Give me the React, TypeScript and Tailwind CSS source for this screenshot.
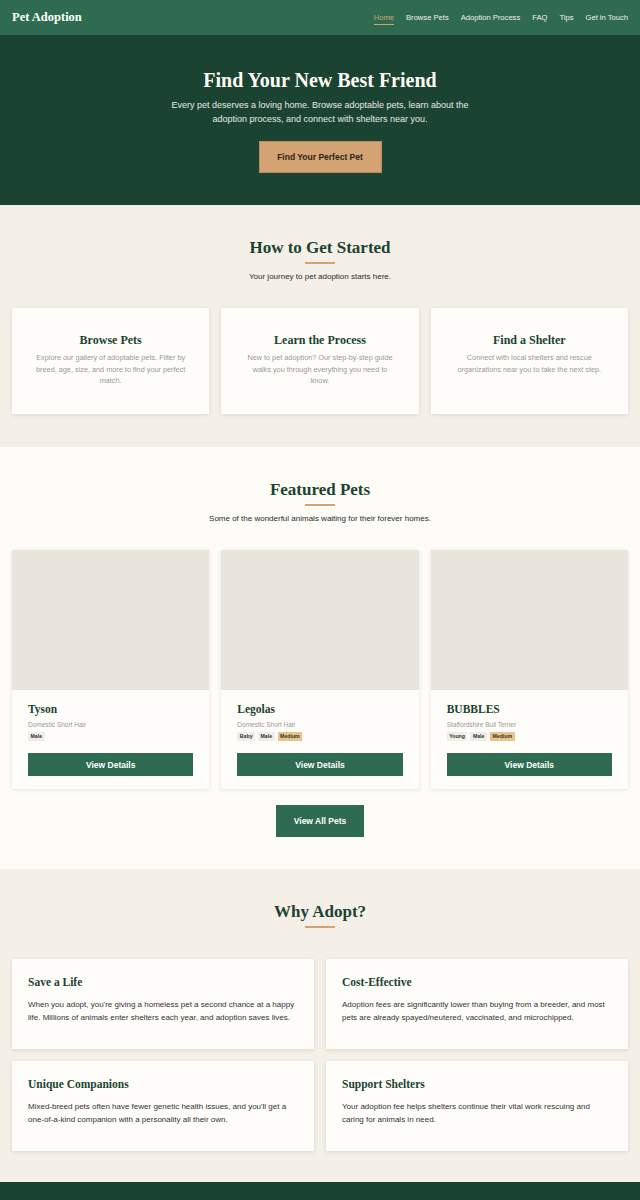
const serif = "font-['Liberation_Serif',Georgia,serif]";

const steps = [
  {
    title: 'Browse Pets',
    text: 'Explore our gallery of adoptable pets. Filter by breed, age, size, and more to find your perfect match.',
  },
  {
    title: 'Learn the Process',
    text: 'New to pet adoption? Our step-by-step guide walks you through everything you need to know.',
  },
  {
    title: 'Find a Shelter',
    text: 'Connect with local shelters and rescue organizations near you to take the next step.',
  },
];

const pets = [
  { name: 'Tyson', breed: 'Domestic Short Hair', tags: ['Male'] },
  { name: 'Legolas', breed: 'Domestic Short Hair', tags: ['Baby', 'Male', 'Medium'] },
  { name: 'BUBBLES', breed: 'Staffordshire Bull Terrier', tags: ['Young', 'Male', 'Medium'] },
];

const reasons = [
  {
    title: 'Save a Life',
    text: "When you adopt, you're giving a homeless pet a second chance at a happy life. Millions of animals enter shelters each year, and adoption saves lives.",
  },
  {
    title: 'Cost-Effective',
    text: 'Adoption fees are significantly lower than buying from a breeder, and most pets are already spayed/neutered, vaccinated, and microchipped.',
  },
  {
    title: 'Unique Companions',
    text: "Mixed-breed pets often have fewer genetic health issues, and you'll get a one-of-a-kind companion with a personality all their own.",
  },
  {
    title: 'Support Shelters',
    text: 'Your adoption fee helps shelters continue their vital work rescuing and caring for animals in need.',
  },
];

const links = ['Home', 'Browse Pets', 'Adoption Process', 'FAQ', 'Tips', 'Get in Touch'];

function SectionHeading({ title, sub }: { title: string; sub?: string }) {
  return (
    <div className="flex flex-col items-center">
      <h2 className={`${serif} text-[17px] font-bold leading-none text-[#1b4332]`}>{title}</h2>
      <div className="mt-[6px] h-[2px] w-[30px] bg-[#d4a373]" />
      {sub && <p className="mt-[6px] text-[8px] leading-[13px] text-[#2b2b2b]">{sub}</p>}
    </div>
  );
}

export default function App() {
  return (
    <div className="min-h-[1200px] bg-[#1b4332] font-['Liberation_Sans',Arial,sans-serif]">
      <nav className="flex h-[35px] items-center justify-between bg-[#2e6b50] px-[12px] shadow-[0_1px_3px_rgba(0,0,0,0.25)]">
        <span className={`${serif} text-[12.5px] font-bold text-white`}>Pet Adoption</span>
        <ul className="flex items-center gap-[12px] text-[7.6px] text-[#f4f0e8]">
          {links.map((l, i) => (
            <li key={l} className="relative">
              <span className={i === 0 ? 'text-[#d4a373]' : ''}>{l}</span>
              {i === 0 && <span className="absolute left-0 right-0 top-[12px] h-[1.5px] bg-[#d4a373]" />}
            </li>
          ))}
        </ul>
      </nav>

      <header className="flex h-[170px] flex-col items-center bg-[#1b4332] pt-[35px] text-center">
        <h1 className={`${serif} text-[20px] font-bold leading-none text-[#fefcf5]`}>Find Your New Best Friend</h1>
        <p className="mt-[8px] w-[300px] text-[9px] leading-[14px] text-[#e8ebe6]">
          Every pet deserves a loving home. Browse adoptable pets, learn about the adoption process, and connect with
          shelters near you.
        </p>
        <button className="mt-[15px] h-[32px] w-[123px] border border-[#b88a5c] bg-[#d4a373] text-[8.5px] font-bold text-[#2a2418]">
          Find Your Perfect Pet
        </button>
      </header>

      <section className="bg-[#f4f0e8] px-[12px] pb-[33px] pt-[34px]">
        <SectionHeading title="How to Get Started" sub="Your journey to pet adoption starts here." />
        <div className="mt-[25px] grid grid-cols-3 gap-[12px]">
          {steps.map((s) => (
            <div
              key={s.title}
              className="flex h-[106px] flex-col items-center bg-[#fefdf9] px-[24px] pt-[26px] text-center shadow-[0_1px_4px_rgba(0,0,0,0.1)]"
            >
              <h3 className={`${serif} text-[12px] font-bold leading-none text-[#1b4332]`}>{s.title}</h3>
              <p className="mt-[6px] text-[7.3px] leading-[11.5px] text-[#9a9a96]">{s.text}</p>
            </div>
          ))}
        </div>
      </section>

      <section className="bg-[#fdfcf7] px-[12px] pb-[32px] pt-[34px]">
        <SectionHeading title="Featured Pets" sub="Some of the wonderful animals waiting for their forever homes." />
        <div className="mt-[25px] grid grid-cols-3 gap-[12px]">
          {pets.map((p) => (
            <div key={p.name} className="bg-[#fefdf9] shadow-[0_1px_4px_rgba(0,0,0,0.1)]">
              <div className="h-[140px] bg-[#e8e6dc]" />
              <div className="px-[16px] pb-[13px] pt-[14px]">
                <h3 className={`${serif} text-[11.5px] font-bold leading-none text-[#1b4332]`}>{p.name}</h3>
                <p className="mt-[4px] text-[6.5px] text-[#9a9a96]">{p.breed}</p>
                <div className="mt-[3px] flex gap-[3px]">
                  {p.tags.map((t) => (
                    <span
                      key={t}
                      className={`px-[2.5px] py-[2px] text-[5.2px] font-bold leading-none text-[#333] ${
                        t === 'Medium' ? 'bg-[#e9c48a]' : 'bg-[#efede6]'
                      }`}
                    >
                      {t}
                    </span>
                  ))}
                </div>
                <button className="mt-[12px] h-[23px] w-full bg-[#2e6b50] text-[8.5px] font-bold text-white">
                  View Details
                </button>
              </div>
            </div>
          ))}
        </div>
        <div className="mt-[16px] flex justify-center">
          <button className="h-[32px] w-[88px] bg-[#2e6b50] text-[8.5px] font-bold text-white">View All Pets</button>
        </div>
      </section>

      <section className="bg-[#f4f0e8] px-[12px] pb-[31px] pt-[34px]">
        <SectionHeading title="Why Adopt?" />
        <div className="mt-[31px] grid grid-cols-2 gap-[12px]">
          {reasons.map((r) => (
            <div key={r.title} className="h-[90px] bg-[#fefdf9] px-[16px] pt-[18px] shadow-[0_1px_4px_rgba(0,0,0,0.1)]">
              <h3 className={`${serif} text-[11.5px] font-bold leading-none text-[#1b4332]`}>{r.title}</h3>
              <p className="mt-[9px] text-[8px] leading-[13px] text-[#333]">{r.text}</p>
            </div>
          ))}
        </div>
      </section>

      <footer className="h-[19px] bg-[#1b4332]" />
    </div>
  );
}
